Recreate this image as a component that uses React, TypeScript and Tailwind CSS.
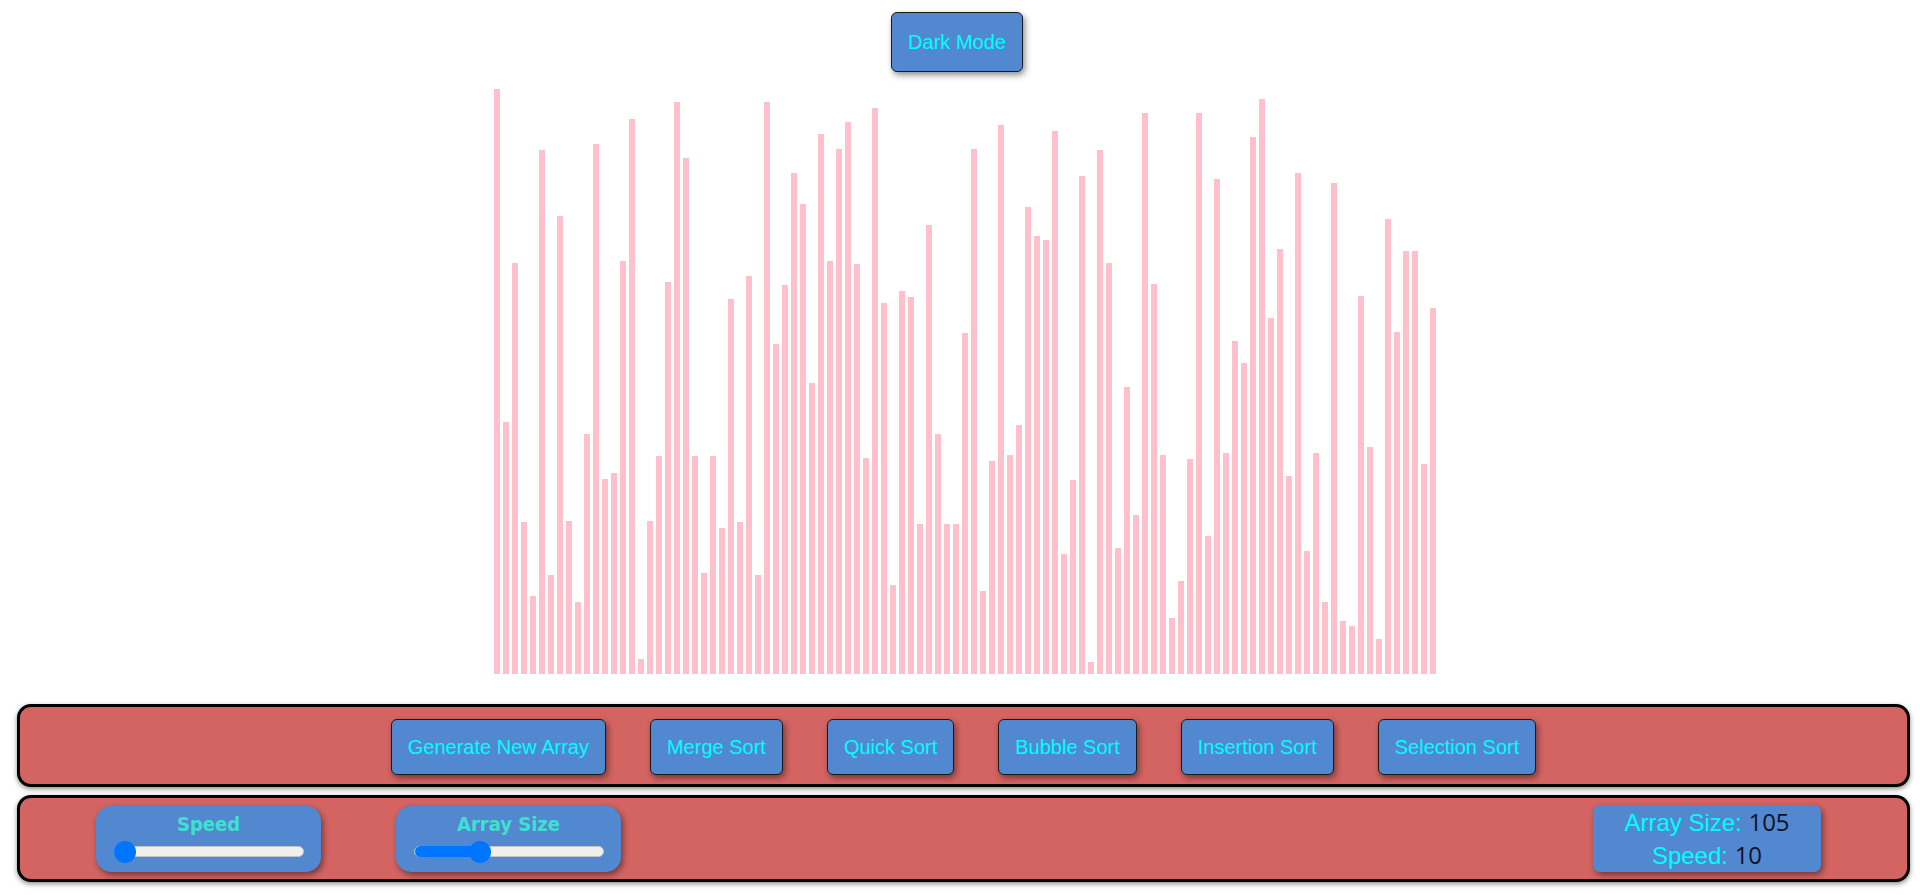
import React from "react";

const bars = [
  585, 252, 411, 152, 78, 524, 99, 458, 153, 72, 240, 530, 195, 201, 413, 555, 15, 153, 218, 392, 572,
  516, 218, 101, 218, 146, 375, 152, 398, 99, 572, 330, 389, 501, 470, 291, 540, 413, 525, 552, 410,
  216, 566, 371, 89, 383, 377, 150, 449, 240, 150, 150, 341, 525, 83, 213, 549, 219, 249, 467, 438,
  434, 543, 120, 194, 498, 12, 524, 411, 126, 287, 159, 561, 390, 219, 56, 93, 215, 561, 138, 495,
  221, 333, 311, 537, 575, 356, 425, 198, 501, 123, 221, 72, 491, 53, 48, 378, 227, 35, 455, 342,
  423, 423, 210, 366,
];

const sorts = [
  "Generate New Array",
  "Merge Sort",
  "Quick Sort",
  "Bubble Sort",
  "Insertion Sort",
  "Selection Sort",
];

const btn =
  "bg-[#5188d0] text-[#00ffff] text-[20px] font-['Liberation_Sans',Arial,sans-serif] border border-[#1a1a1a] rounded-[6px] px-4 shadow-[2px_3px_6px_rgba(0,0,0,0.45)] whitespace-nowrap";

function Slider({ value }: { value: number }) {
  const travel = 168;
  const left = Math.round(value * travel);
  return (
    <div className="relative w-[190px] h-[11px] rounded-full bg-[#efefef] border border-[#c4c4c4]">
      <div
        className="absolute left-0 top-[-1px] h-[11px] rounded-full bg-[#0075ff]"
        style={{ width: left + 11 }}
      />
      <div
        className="absolute top-[-6px] w-[22px] h-[22px] rounded-full bg-[#0075ff]"
        style={{ left: left - 1 }}
      />
    </div>
  );
}

function SliderCard({ label, value }: { label: string; value: number }) {
  return (
    <div className="w-[225px] h-[66px] rounded-[15px] bg-[#5188d0] shadow-[2px_3px_6px_rgba(0,0,0,0.45)] flex flex-col items-center pt-[5px]">
      <div className="text-[#40e0d0] text-[20px] font-bold leading-[27px] font-['DejaVu_Sans_Condensed','DejaVu_Sans',sans-serif]">
        {label}
      </div>
      <div className="mt-[8px]">
        <Slider value={value} />
      </div>
    </div>
  );
}

export default function App() {
  return (
    <div className="w-[1920px] h-[895px] bg-white overflow-hidden font-['Liberation_Sans',Arial,sans-serif]">
      <div className="flex justify-center pt-[12px] pl-[10px] pr-[16px]">
        <button className={btn + " h-[60px]"}>Dark Mode</button>
      </div>

      <div className="h-[602px] flex justify-center items-end pl-[10px]">
        {bars.map((h, i) => (
          <div
            key={i}
            className="w-[6px] bg-[#ffc0cb] mx-[1.5px]"
            style={{ height: h }}
          />
        ))}
      </div>

      <div className="ml-[17px] mr-[10px] mt-[30px] h-[83px] border-[3px] border-black rounded-[14px] bg-[#d36462] shadow-[0_2px_5px_rgba(0,0,0,0.45)] flex items-center justify-center gap-[44px] pt-[3px]">
        {sorts.map((s) => (
          <button key={s} className={btn + " h-[56px]"}>
            {s}
          </button>
        ))}
      </div>

      <div className="ml-[17px] mr-[10px] mt-[8px] h-[87px] border-[3px] border-black rounded-[14px] bg-[#d36462] shadow-[0_2px_5px_rgba(0,0,0,0.45)] flex items-center pl-[76px] pr-[86px]">
        <SliderCard label="Speed" value={0} />
        <div className="ml-[75px]">
          <SliderCard label="Array Size" value={0.325} />
        </div>
        <div className="ml-auto w-[228px] h-[67px] rounded-[7px] bg-[#5188d0] shadow-[2px_3px_6px_rgba(0,0,0,0.45)] flex flex-col items-center justify-center text-[24px] leading-[32px] text-[#00ffff]">
          <div>
            Array Size: <span className="text-[#111122] font-['Open_Sans',sans-serif]">105</span>
          </div>
          <div>
            Speed: <span className="text-[#111122] font-['Open_Sans',sans-serif]">10</span>
          </div>
        </div>
      </div>
    </div>
  );
}
